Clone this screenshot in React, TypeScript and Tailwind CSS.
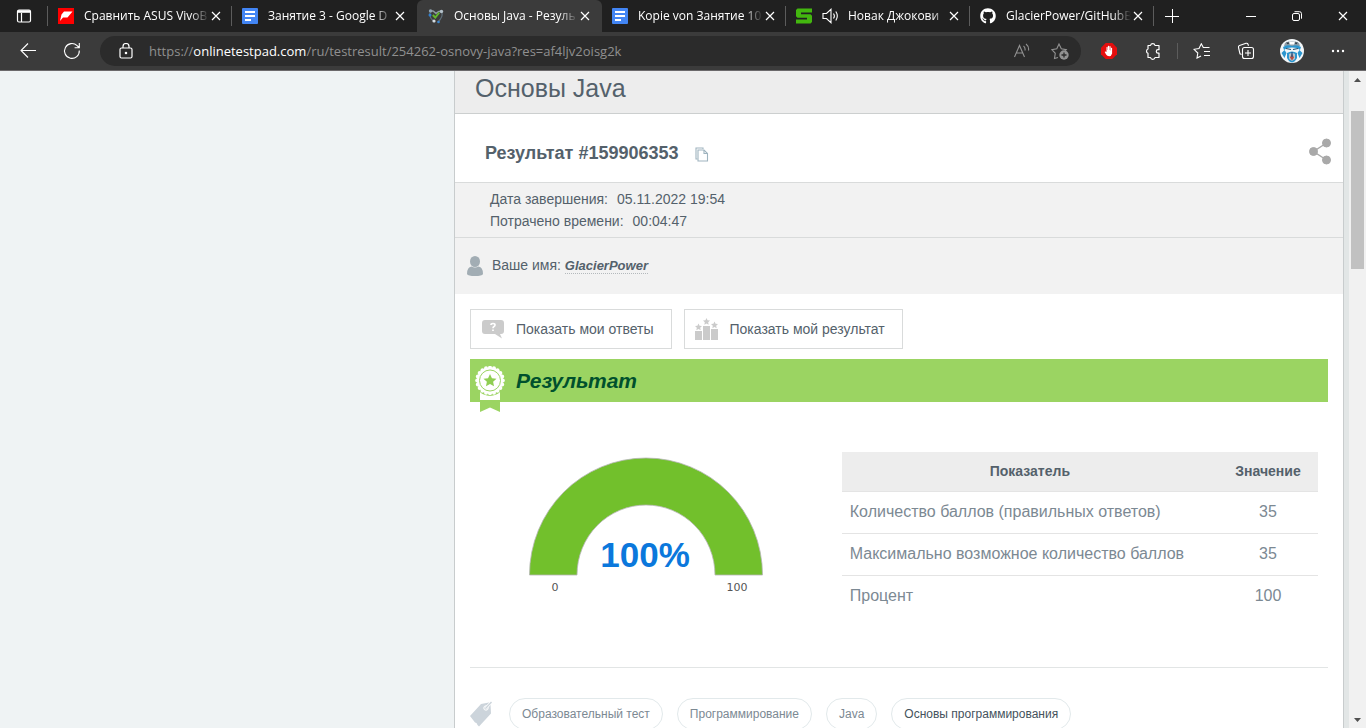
import type { ReactNode } from "react";
import { FaGithub } from "react-icons/fa";

function CloseIcon() {
  return (
    <svg width="10" height="10" viewBox="0 0 10 10" stroke="currentColor" strokeWidth="1.2" fill="none">
      <path d="M1 1l8 8M9 1l-8 8" />
    </svg>
  );
}

function DocsIcon() {
  return (
    <svg width="16" height="16" viewBox="0 0 16 16">
      <rect width="16" height="16" rx="1" fill="#4285f4" />
      <path d="M3 4h10M3 8h10M3 12h6" stroke="#fff" strokeWidth="1.8" />
    </svg>
  );
}

function ShopIcon() {
  return (
    <svg width="16" height="16" viewBox="0 0 16 16">
      <rect width="16" height="16" fill="#f00" />
      <path d="M2 13l1.500-6.500L6 3.500h8.500L9.500 9.500H5z" fill="#fff" />
    </svg>
  );
}

function TestPadIcon() {
  return (
    <svg width="16" height="16" viewBox="0 0 16 16" fill="none">
      <path d="M2 5c-1 4 2 7 5 9M14 5c1 4-2 7-4 9" stroke="#5d6d78" strokeWidth="1.3" />
      <path d="M3 2.500q2.500 0 5 3 2.500-3 6-2.500" stroke="#8a979f" strokeWidth="1.400" />
      <circle cx="2.500" cy="3" r="1.700" fill="#8fa4b2" />
      <circle cx="13.500" cy="3.500" r="1.700" fill="#b3c1ca" />
      <circle cx="2" cy="7" r="1.500" fill="#2f7fd0" />
      <circle cx="6" cy="13" r="1.600" fill="#d5dde2" />
      <circle cx="10.500" cy="14" r="1.300" fill="#3c88d0" />
      <path d="M4.800 7l2.500 2.500 4-5" stroke="#63b52c" strokeWidth="2" />
    </svg>
  );
}

function SportIcon() {
  return (
    <svg width="16" height="16" viewBox="0 0 16 16">
      <path d="M1.500 0.500H16v4H5v1.800h9.500L16 7.800V14l-1.500 1.500H0v-4h11V9.700H1.500L0 8.200V2z" fill="#43b70f" />
    </svg>
  );
}

function SoundIcon() {
  return (
    <svg width="18" height="16" viewBox="0 0 18 16" fill="none" stroke="#fff" strokeWidth="1.100">
      <path d="M1 5.500h3.500L9 1.300v13.400L4.500 10.500H1zM11.500 5.500q1.800 2.500 0 5M13.800 3.500q3 4.500 0 9" />
    </svg>
  );
}

type Tab = { title: string; icon: ReactNode; active?: boolean; line?: boolean; sound?: boolean };

const tabs: Tab[] = [
  { title: "Сравнить ASUS VivoB", icon: <ShopIcon />, line: true },
  { title: "Занятие 3 - Google D", icon: <DocsIcon /> },
  { title: "Основы Java - Резуль", icon: <TestPadIcon />, active: true },
  { title: "Kopie von Занятие 10", icon: <DocsIcon />, line: true },
  { title: "Новак Джокови", icon: <SportIcon />, line: true, sound: true },
  { title: "GlacierPower/GitHubB", icon: <FaGithub size={16} />, line: true },
];

function TabItem({ tab }: { tab: Tab }) {
  return (
    <div
      className={
        tab.active
          ? "ml-px flex h-8 w-[185px] min-w-0 items-center rounded-t-md bg-[#3b3b3b] pr-3 pl-[11px]"
          : "flex h-8 w-[184px] min-w-0 items-center pl-2.5"
      }
    >
      <button className="flex min-w-0 flex-1 items-center text-left">
        <span className="shrink-0">{tab.icon}</span>
        {tab.sound && (
          <span className="ml-2.5 shrink-0">
            <SoundIcon />
          </span>
        )}
        <span
          className={
            tab.sound
              ? "ml-2 min-w-0 flex-1 mask-r-from-85% text-[12px] leading-4 whitespace-nowrap"
              : "ml-2.5 min-w-0 flex-1 mask-r-from-85% text-[12px] leading-4 whitespace-nowrap"
          }
        >
          {tab.title}
        </span>
      </button>
      <button aria-label="Закрыть вкладку" className="ml-0.5 shrink-0">
        <CloseIcon />
      </button>
      {!tab.active && <span className={tab.line ? "ml-2.5 h-5 w-px bg-[#5c5c5c]" : "ml-2.5 h-5 w-px"} />}
    </div>
  );
}

function ToolButton({ label, children }: { label: string; children: ReactNode }) {
  return (
    <button aria-label={label} className="flex h-8 w-11 shrink-0 items-center justify-center">
      {children}
    </button>
  );
}

function TabStrip() {
  return (
    <div className="flex h-8 shrink-0 items-center bg-[#202020] text-white">
      <button aria-label="Меню вкладок" className="flex w-[47px] shrink-0 justify-center">
        <svg width="16" height="16" viewBox="0 0 16 16" fill="none" stroke="#fff" strokeWidth="1.200">
          <rect x="1.500" y="2" width="13" height="12" rx="1.500" />
          <path d="M2 3.500h12" strokeWidth="2.600" />
          <path d="M5.500 5v9" />
        </svg>
      </button>
      <span className="h-5 w-px shrink-0 bg-[#5c5c5c]" />
      {tabs.map((tab) => (
        <TabItem key={tab.title} tab={tab} />
      ))}
      <button aria-label="Новая вкладка" className="flex w-9 shrink-0 justify-center">
        <svg width="14" height="14" viewBox="0 0 14 14" stroke="#fff" strokeWidth="1">
          <path d="M7.500 0v14M0 7.500h14" />
        </svg>
      </button>
      <div className="ml-auto flex shrink-0">
        <button aria-label="Свернуть" className="flex w-[46px] items-center justify-center">
          <svg width="10" height="10" viewBox="0 0 10 10" stroke="#fff">
            <path d="M0 5.500h10" />
          </svg>
        </button>
        <button aria-label="Развернуть" className="flex w-[46px] items-center justify-center">
          <svg width="10" height="10" viewBox="0 0 10 10" stroke="#fff" fill="none">
            <rect x="0.500" y="2.500" width="7" height="7" rx="1.500" />
            <path d="M2.500 0.700h5q2 0 2 2v5" />
          </svg>
        </button>
        <button aria-label="Закрыть" className="flex w-[46px] items-center justify-center">
          <CloseIcon />
        </button>
      </div>
    </div>
  );
}

function Toolbar() {
  return (
    <div className="flex h-[39px] shrink-0 items-center border-b border-[#6b696b] bg-[#3b3b3b] px-1.5 text-white">
      <ToolButton label="Назад">
        <svg width="16" height="16" viewBox="0 0 16 16" fill="none" stroke="#fff" strokeWidth="1.100">
          <path d="M16 7.500H1M8 0.500l-7 7 7 7" />
        </svg>
      </ToolButton>
      <ToolButton label="Обновить">
        <svg width="18" height="18" viewBox="0 0 18 18" fill="none" stroke="#fff" strokeWidth="1.100">
          <path d="M16.300 8.500a7.400 7.400 0 1 1-2.200-4.800L16 5.500M16.300 1v4.700h-4.700" />
        </svg>
      </ToolButton>
      <div className="ml-1.5 flex h-[30px] min-w-0 flex-1 items-center rounded-full bg-[#2b2b2b] pr-3 pl-[19px]">
        <svg width="14" height="16" viewBox="0 0 14 16" fill="none" stroke="#fff" strokeWidth="1.200" className="shrink-0">
          <rect x="1" y="5" width="12" height="10" rx="1.500" />
          <path d="M4 5V3.500a3 3 0 0 1 6 0V5" />
          <circle cx="7" cy="10" r="0.700" fill="#fff" />
        </svg>
        <p className="ml-4 min-w-0 flex-1 truncate text-[13px] leading-5 text-[#909090]">
          https://<span className="text-white">onlinetestpad.com</span>/ru/testresult/254262-osnovy-java?res=af4ljv2oisg2k
        </p>
        <button aria-label="Прочесть вслух" className="ml-4 shrink-0">
          <svg width="18" height="16" viewBox="0 0 18 16" fill="none" stroke="#929292" strokeWidth="1.100">
            <path d="M1.500 14L6.500 2.500 11.500 14M3.300 10h6.400M10.500 3q2 1.500 1.500 4.500M13 1q3.200 2.500 2.500 6.500" />
          </svg>
        </button>
        <button aria-label="Добавить в избранное" className="ml-5 shrink-0">
          <svg width="18" height="18" viewBox="0 0 18 18" fill="none" stroke="#929292" strokeWidth="1.100">
            <path d="M7 15.500L3.500 16.500l.8-5.200L.8 7.600l5-.8L8 2l2.300 4.800 5 .8-1.300 1.400" />
            <circle cx="13" cy="13" r="4.700" fill="#929292" stroke="none" />
            <path d="M13 10.500v5M10.500 13h5" stroke="#2b2b2b" strokeWidth="1.300" />
          </svg>
        </button>
      </div>
      <span className="w-1.5 shrink-0" />
      <ToolButton label="Блокировщик рекламы">
        <svg width="16" height="16" viewBox="0 0 16 16">
          <path d="M4.700 0h6.600L16 4.700v6.600L11.300 16H4.700L0 11.300V4.700z" fill="#e40d0d" />
          <path
            d="M4.500 8.500l1 .500V4.200q.600-.700 1.100 0V7h.300V3q.600-.700 1.200 0v4h.300V3.400q.600-.700 1.200 0V7.400h.3V5q.700-.700 1.200 0v5.500q-.600 2.700-3 2.700-2.100 0-3-1.800L3.700 9q0-.700.8-.500z"
            fill="#fff"
          />
        </svg>
      </ToolButton>
      <ToolButton label="Расширения">
        <svg width="16" height="18" viewBox="0 0 16 18" fill="none" stroke="#fff" strokeWidth="1.200">
          <path
            d="M5.500 3.500a2.300 2.300 0 0 1 4.500 0h4v4.200h-1a1.700 1.700 0 0 0 0 3.400h1v4.400h-4a2.300 2.300 0 0 1-4.500 0H3v-4.200a2.300 2.300 0 0 1 0-4.300V3.500z"
            strokeLinejoin="round"
          />
        </svg>
      </ToolButton>
      <span className="mx-0.5 h-4 w-px shrink-0 bg-[#5c5c5c]" />
      <ToolButton label="Избранное">
        <svg width="18" height="16" viewBox="0 0 18 16" fill="none" stroke="#fff" strokeWidth="1.100">
          <path d="M8 13L4 15l.8-5L1 6.300l5-.8L8.300.8l2 3.700h6.200M11 8.500h6M11 12.500h6" />
        </svg>
      </ToolButton>
      <ToolButton label="Коллекции">
        <svg width="18" height="18" viewBox="0 0 18 18" fill="none" stroke="#fff" strokeWidth="1.100">
          <path d="M4.500 12.500L3 11.800 1.500 5.500q-.4-1.500 1-2L9 1.300q1.500-.4 2 1l.5 1.400" />
          <rect x="5.500" y="5.500" width="11" height="11" rx="2" />
          <path d="M11 8v6M8 11h6" />
        </svg>
      </ToolButton>
      <span className="mx-0.5">
        <ToolButton label="Профиль">
          <svg width="24" height="24" viewBox="0 0 24 24">
            <circle cx="12" cy="12" r="12" fill="#f2f6f8" />
            <path d="M5 4q7-4 14 0l1 3H4z" fill="#8e9ea9" />
            <path d="M6 3.500h3.500L8 5.500zM14.500 3.500H18l-2 2z" fill="#26343e" />
            <path d="M9 2.500h6l-1 3h-4z" fill="#fff" />
            <path d="M3 8q4-3 9-1 5-2 9 1l-1 3-3-2-5-.5L7 9l-3 2z" fill="#2b96cf" />
            <path d="M6 9.500l5 1M18 9.500l-5 1" stroke="#234e6d" strokeWidth="1.200" />
            <path d="M1.500 14l3-3 2 3-2 5zM22.500 14l-3-3-2 3 2 5z" fill="#2b96cf" />
            <path d="M7 14q5-3 10 0v5q-2 4-5 4.500-3-.5-5-4.500z" fill="#2b96cf" />
            <path d="M9 15q3-2 6 0v5l-3 2-3-2z" fill="#b9c4ca" />
            <path d="M12 14.500l2 4-2 3-2-3z" fill="#b44e45" />
            <path d="M11.300 13h1.400v5h-1.400z" fill="#275a8e" />
          </svg>
        </ToolButton>
      </span>
      <ToolButton label="Настройки">
        <svg width="14" height="4" viewBox="0 0 14 4" fill="#fff">
          <circle cx="2" cy="2" r="1.200" />
          <circle cx="7" cy="2" r="1.200" />
          <circle cx="12" cy="2" r="1.200" />
        </svg>
      </ToolButton>
    </div>
  );
}

const STAR = "M0-5L1.500-1.700 5-1.400 2.400 1 3.100 4.500 0 2.700-3.100 4.500-2.400 1-5-1.400-1.500-1.700z";

function Medal() {
  const petals = Array.from({ length: 20 }, (_, i) => (i * Math.PI) / 10);
  return (
    <svg width="30" height="47" viewBox="0 0 30 47" className="absolute top-[7px] left-[5px]">
      <path d="M5 26h20v20l-10-4.500L5 46z" fill="#9bd462" />
      <path d="M5 24h20v10H5z" fill="#fff" />
      <circle cx="15" cy="15" r="15" fill="#9bd462" />
      {petals.map((a) => (
        <circle key={a} cx={15 + 12.8 * Math.cos(a)} cy={14.5 + 12.8 * Math.sin(a)} r="2" fill="#fff" />
      ))}
      <circle cx="15" cy="14.500" r="13" fill="#fff" />
      <circle cx="15" cy="14.500" r="10.500" fill="none" stroke="#9bd462" strokeWidth="1" />
      <path d={STAR} transform="translate(15 14.500) scale(1.300)" fill="#8fce52" />
    </svg>
  );
}

function Gauge() {
  return (
    <svg width="236" height="140" viewBox="0 0 236 140" role="img" aria-label="100%">
      <path d="M1.500 118A116.500 117 0 0 1 234.500 118H187A69 70 0 0 0 49 118z" fill="#72c02c" stroke="#b5b5b5" strokeWidth="0.800" />
      <text x="117" y="110" textAnchor="middle" fill="#0b78dc" className="font-['Liberation_Sans',Arial,sans-serif] text-[35px] font-bold">
        100%
      </text>
      <text x="27" y="134" textAnchor="middle" fill="#555" className="font-['DejaVu_Sans',sans-serif] text-[11px]">
        0
      </text>
      <text x="209" y="134" textAnchor="middle" fill="#555" className="font-['DejaVu_Sans',sans-serif] text-[11px]">
        100
      </text>
    </svg>
  );
}

const rows = [
  ["Количество баллов (правильных ответов)", "35"],
  ["Максимально возможное количество баллов", "35"],
  ["Процент", "100"],
];

const tags = ["Образовательный тест", "Программирование", "Java"];

function ResultPage() {
  return (
    <main className="min-w-0 flex-1 self-start border-x border-[#c8cccd] bg-white text-[#54616b]">
      <header className="flex h-[43px] items-center border-b border-[#cccfcf] bg-[#ededed] px-5 pb-2">
        <h1 className="text-[25px] leading-8">Основы Java</h1>
      </header>

      <section className="flex h-[69px] items-center border-b border-[#d9dbdb] pr-3 pl-[30px]">
        <h2 className="pt-2.5 text-[18px] leading-6 font-bold">Результат #159906353</h2>
        <button aria-label="Копировать" className="ml-4 pt-3">
          <svg width="14" height="15" viewBox="0 0 14 15" fill="none" stroke="#9fb4bf" strokeWidth="1.100">
            <path d="M2.500 12H1V1h7v1" />
            <path d="M3 3h6l3.500 3.500V14H3z" fill="#fff" />
            <path d="M9 3v3.500h3.500" />
          </svg>
        </button>
        <button aria-label="Поделиться" className="ml-auto pt-1.5">
          <svg width="22" height="27" viewBox="0 0 22 27" fill="#a9a9a9" stroke="#a9a9a9">
            <path d="M17.500 5L4.500 13.500l13 8.500" fill="none" strokeWidth="1.400" />
            <circle cx="17.500" cy="5" r="4" />
            <circle cx="4.500" cy="13.500" r="4" />
            <circle cx="17.500" cy="22" r="4" />
          </svg>
        </button>
      </section>

      <section className="border-b border-[#d9dbdb] bg-[#f2f2f2] px-[35px] py-[5px] text-[14px] leading-[22px]">
        <p className="flex gap-[9px]">
          <span>Дата завершения:</span>
          <span>05.11.2022 19:54</span>
        </p>
        <p className="flex gap-[9px]">
          <span>Потрачено времени:</span>
          <span>00:04:47</span>
        </p>
      </section>

      <section className="flex h-14 items-center bg-[#f2f2f2] pl-3 text-[14px]">
        <svg width="16" height="20" viewBox="0 0 16 20" fill="#a2adb4">
          <ellipse cx="8" cy="5.500" rx="5" ry="5.500" />
          <path d="M0 18q0-7 4.500-7.500 3.500 2 7 0Q16 11 16 18q-1 2-8 2t-8-2z" />
        </svg>
        <p className="pb-0.5 pl-[9px] leading-4">
          Ваше имя:{" "}
          <span className="border-b border-dotted border-[#b4b9bc] text-[13px] font-bold italic">GlacierPower</span>
        </p>
      </section>

      <div className="px-[15px] pt-[15px]">
        <div className="flex flex-wrap gap-3">
          <button className="flex h-10 items-center gap-3 border border-[#d9dbdb] pr-[17px] pl-[11px] text-[14px]">
            <svg width="22" height="20" viewBox="0 0 22 20" fill="#cbcbcb">
              <path d="M3 1h16q3 0 3 3v8q0 3-3 3h-1l2 4.500L13 15H3q-3 0-3-3V4q0-3 3-3z" />
              <path d="M9 6q0-1.500 2-1.500T13 6q0 1-1 1.500t-1 1.800M11 10.500v1.500" fill="none" stroke="#fff" strokeWidth="1.700" />
            </svg>
            Показать мои ответы
          </button>
          <button className="flex h-10 items-center gap-3 border border-[#d9dbdb] pr-[17px] pl-[10px] text-[14px]">
            <svg width="23" height="22" viewBox="0 0 23 22" fill="#cbcbcb">
              <path d="M0 13h7v9H0zM8 8h7v14H8zM16 11h7v11h-7z" />
              <path d={STAR} transform="translate(3.500 9) scale(.7)" />
              <path d={STAR} transform="translate(11.500 3.500) scale(.7)" />
              <path d={STAR} transform="translate(19.500 7) scale(.7)" />
            </svg>
            Показать мой результат
          </button>
        </div>

        <section>
          <div className="relative mt-2.5 flex h-[43px] items-center bg-[#9bd462] pl-[46px]">
            <Medal />
            <h2 className="text-[21px] leading-7 font-bold text-[#00502d] italic">Результат</h2>
          </div>
          <div className="flex items-start pt-[50px] pb-[50px]">
            <div className="flex w-[41%] justify-center pt-[5px]">
              <Gauge />
            </div>
            <div className="flex-1 pr-2.5 pl-5">
              <table className="w-full border-collapse text-[16px] text-[#7c8993]">
                <thead>
                  <tr className="h-[39px] border-b border-[#e4e4e4] bg-[#ededed] text-[14px] text-[#54616b]">
                    <th className="font-bold">Показатель</th>
                    <th className="w-[100px] font-bold">Значение</th>
                  </tr>
                </thead>
                <tbody>
                  {rows.map(([name, value]) => (
                    <tr key={name} className="h-[42px] border-b border-[#e4e4e4] last:border-0">
                      <td className="px-2">{name}</td>
                      <td className="text-center">{value}</td>
                    </tr>
                  ))}
                </tbody>
              </table>
            </div>
          </div>
        </section>

        <footer className="flex items-center border-t border-[#e2e5e5] pt-[30px] pb-5 text-[12px]">
          <svg width="25" height="27" viewBox="0 0 25 27" className="shrink-0">
            <path d="M11 3l8-1.500 1.500 1.500 .500 9.500L9 25.500l-1.500-1.500-1-2-1.500-.500L0 15z" fill="#ccd4db" />
            <circle cx="16" cy="7" r="2.200" fill="#ccd4db" stroke="#fff" strokeWidth="1" />
            <path d="M15.500 7.500L21.500 1" stroke="#fff" strokeWidth="2.600" />
            <path d="M15.500 7.500L21.500 1" stroke="#ccd4db" strokeWidth="1.400" />
          </svg>
          <ul className="ml-3.5 flex flex-wrap gap-3.5">
            {tags.map((tag) => (
              <li key={tag}>
                <a href="#" className="flex h-8 items-center rounded-full border border-[#e2e9eb] px-3 text-[#7c8993]">
                  {tag}
                </a>
              </li>
            ))}
            <li>
              <a href="#" className="flex h-8 items-center rounded-full border border-[#e2e9eb] px-3 text-[#45525c]">
                Основы программирования
              </a>
            </li>
          </ul>
        </footer>
      </div>
    </main>
  );
}

function ScrollRail() {
  return (
    <div className="flex w-[17px] shrink-0 flex-col items-center bg-[#f1f1f1]">
      <svg width="17" height="17" viewBox="0 0 17 17" fill="#505050">
        <path d="M5 11l3.500-4 3.500 4z" />
      </svg>
      <span className="mt-[23px] h-[158px] w-[13px] bg-[#c1c1c1]" />
      <svg width="17" height="17" viewBox="0 0 17 17" fill="#505050" className="mt-auto">
        <path d="M5 7l3.500 4L12 7z" />
      </svg>
    </div>
  );
}

export default function App() {
  return (
    <div className="flex h-screen flex-col overflow-hidden font-['Open_Sans','Noto_Sans',sans-serif]">
      <TabStrip />
      <Toolbar />
      <div className="flex min-h-0 flex-1 bg-[#eff3f4] font-['Liberation_Sans',Arial,sans-serif]">
        <div className="w-1/3 max-w-[454px] min-w-0 flex-none" />
        <ResultPage />
        <div className="w-[5px] shrink-0 bg-[#e2e6e6]" />
        <ScrollRail />
      </div>
    </div>
  );
}
